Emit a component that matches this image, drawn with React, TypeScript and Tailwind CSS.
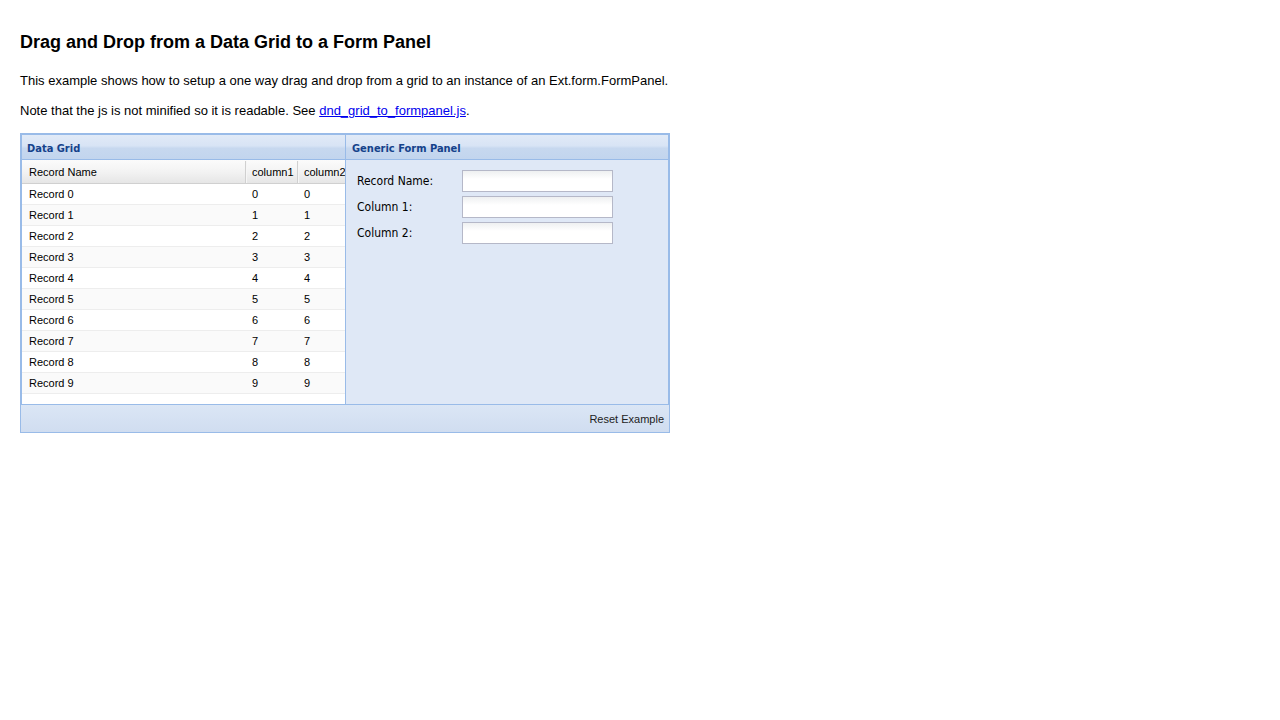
import React from "react";

const rows = Array.from({ length: 10 }, (_, i) => i);

export default function App() {
  return (
    <div className="min-h-screen bg-white px-5 pt-[31px] font-['Liberation_Sans',Arial,sans-serif] text-black">
      <h1 className="text-[18px] font-bold leading-[22px]">Drag and Drop from a Data Grid to a Form Panel</h1>
      <p className="mt-[20px] text-[13px] leading-[16px]">
        This example shows how to setup a one way drag and drop from a grid to an instance of an Ext.form.FormPanel.
      </p>
      <p className="mt-[14px] text-[13px] leading-[16px]">
        Note that the js is not minified so it is readable. See{" "}
        <a href="#" className="text-[#0000ee] underline">dnd_grid_to_formpanel.js</a>.
      </p>

      <div className="mt-[14px] w-[650px] border border-[#99bbe8]">
        <div className="flex h-[271px]">
          {/* Data grid panel */}
          <div className="flex w-[325px] flex-col border border-[#99bbe8]">
            <div className="h-[25px] border-b border-[#99bbe8] bg-[linear-gradient(#e1eaf7_0%,#d8e4f5_45%,#c7d8ef_55%,#c2d5ee_100%)] pl-[5px] pt-[6px] font-['DejaVu_Sans_Condensed','DejaVu_Sans',sans-serif] text-[11px] font-bold leading-[15px] text-[#15428b]">
              Data Grid
            </div>
            <div className="flex-1 overflow-hidden bg-white">
              <div className="flex h-[24px] border-b border-[#d0d0d0] bg-[linear-gradient(#fbfbfb,#f3f3f3_50%,#e6e6e6)] pt-[1px] text-[11px] leading-[22px]">
                <div className="w-[224px] shrink-0 border-r border-[#d0d0d0] pl-[7px]">Record Name</div>
                <div className="w-[52px] shrink-0 border-l border-r border-l-[#f6f6f6] border-r-[#d0d0d0] pl-[5px]">column1</div>
                <div className="shrink-0 whitespace-nowrap border-l border-[#f6f6f6] pl-[5px]">column2</div>
              </div>
              {rows.map((i) => (
                <div
                  key={i}
                  className={`flex h-[21px] border-b border-[#ededed] text-[11px] leading-[20px] ${i % 2 === 1 ? "bg-[#fafafa]" : "bg-white"}`}
                >
                  <div className="w-[224px] shrink-0 pl-[7px]">Record {i}</div>
                  <div className="w-[53px] shrink-0 pl-[6px]">{i}</div>
                  <div className="shrink-0 pl-[5px]">{i}</div>
                </div>
              ))}
            </div>
          </div>

          {/* Form panel */}
          <div className="flex flex-1 flex-col border border-l-0 border-[#99bbe8]">
            <div className="h-[25px] border-b border-[#99bbe8] bg-[linear-gradient(#e1eaf7_0%,#d8e4f5_45%,#c7d8ef_55%,#c2d5ee_100%)] pl-[6px] pt-[6px] font-['DejaVu_Sans_Condensed','DejaVu_Sans',sans-serif] text-[11px] font-bold leading-[15px] text-[#15428b]">
              Generic Form Panel
            </div>
            <div className="flex flex-1 flex-col gap-[4px] bg-[#dfe8f6] pl-[11px] pt-[10px] font-['DejaVu_Sans_Condensed','DejaVu_Sans',sans-serif] text-[12px] text-black">
              {["Record Name:", "Column 1:", "Column 2:"].map((l) => (
                <div key={l} className="flex h-[22px] items-center">
                  <div className="w-[105px] shrink-0">{l}</div>
                  <div className="h-[22px] w-[151px] border border-[#b5b8c8] bg-[linear-gradient(#eef0f1,#ffffff_40%,#ffffff)]" />
                </div>
              ))}
            </div>
          </div>
        </div>
        <div className="flex h-[27px] items-center justify-end bg-[linear-gradient(#dbe6f5,#d0ddf0)] pr-[5px] pt-[2px] text-[11px] text-[#222]">
          Reset Example
        </div>
      </div>
    </div>
  );
}
